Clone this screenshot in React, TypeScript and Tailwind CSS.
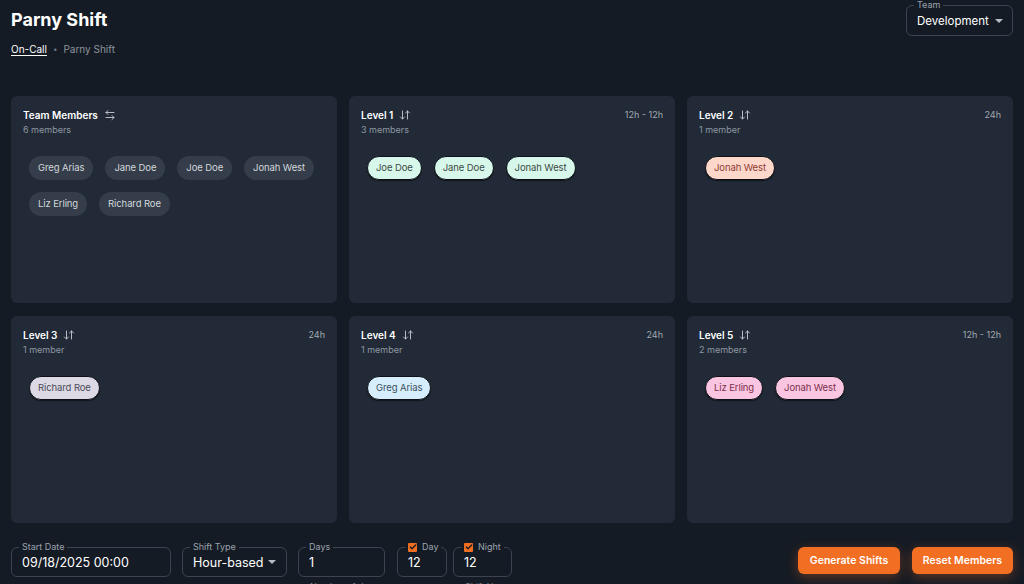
import { ArrowDownUp, ArrowLeftRight, Check } from 'lucide-react';

type Tone = 'gray' | 'mint' | 'peach' | 'lavender' | 'sky' | 'pink';

const toneClass: Record<Tone, string> = {
    gray: 'bg-[#343d49] text-[#d3d7dc] border-transparent',
    mint: 'bg-[#d7f7ea] text-[#3d4a45] border-[#0d1117] shadow-[0_1px_1px_rgba(0,0,0,0.5)]',
    peach: 'bg-[#fdd8ca] text-[#8d3a33] border-[#0d1117] shadow-[0_1px_1px_rgba(0,0,0,0.5)]',
    lavender: 'bg-[#dcd8e4] text-[#4b4b59] border-[#0d1117] shadow-[0_1px_1px_rgba(0,0,0,0.5)]',
    sky: 'bg-[#d6eefc] text-[#3d5062] border-[#0d1117] shadow-[0_1px_1px_rgba(0,0,0,0.5)]',
    pink: 'bg-[#fac5e0] text-[#7c2f4c] border-[#0d1117] shadow-[0_1px_1px_rgba(0,0,0,0.5)]',
};

interface Group {
    title: string;
    count: string;
    hours?: string;
    tone: Tone;
    members: string[];
    team?: boolean;
}

const groups: Group[] = [
    {
        title: 'Team Members',
        count: '6 members',
        tone: 'gray',
        members: ['Greg Arias', 'Jane Doe', 'Joe Doe', 'Jonah West', 'Liz Erling', 'Richard Roe'],
        team: true,
    },
    { title: 'Level 1', count: '3 members', hours: '12h - 12h', tone: 'mint', members: ['Joe Doe', 'Jane Doe', 'Jonah West'] },
    { title: 'Level 2', count: '1 member', hours: '24h', tone: 'peach', members: ['Jonah West'] },
    { title: 'Level 3', count: '1 member', hours: '24h', tone: 'lavender', members: ['Richard Roe'] },
    { title: 'Level 4', count: '1 member', hours: '24h', tone: 'sky', members: ['Greg Arias'] },
    { title: 'Level 5', count: '2 members', hours: '12h - 12h', tone: 'pink', members: ['Liz Erling', 'Jonah West'] },
];

function GroupCard({ group }: { group: Group }) {
    return (
        <div className="bg-[#212a36] rounded-md px-3 pt-3 h-[207px]">
            <div className="flex items-start justify-between">
                <div>
                    <div className="flex items-center gap-[6px] h-[14px]">
                        <span className="text-[10px] font-semibold text-white leading-[14px]">{group.title}</span>
                        {group.team ? (
                            <ArrowLeftRight className="w-[12px] h-[12px] text-[#c9ced6]" strokeWidth={1.8} />
                        ) : (
                            <ArrowDownUp className="w-[12px] h-[12px] text-[#c9ced6]" strokeWidth={1.8} />
                        )}
                    </div>
                    <p className="text-[9px] text-[#8f98a3] leading-[12px] mt-[2px]">{group.count}</p>
                </div>
                {group.hours && (
                    <span className="text-[9px] text-[#a3abb5] leading-[14px]">{group.hours}</span>
                )}
            </div>
            <div className="flex flex-wrap gap-3 px-[6px] mt-[20px]">
                {group.members.map((m) => (
                    <span
                        key={m}
                        className={`h-[24px] px-[8px] rounded-full border flex items-center text-[9.5px] leading-none tracking-[-0.1px] ${toneClass[group.tone]}`}
                    >
                        {m}
                    </span>
                ))}
            </div>
        </div>
    );
}

function Field({
    label,
    value,
    width,
    select,
    checkbox,
    helper,
}: {
    label: string;
    value: string;
    width: string;
    select?: boolean;
    checkbox?: boolean;
    helper?: string;
}) {
    return (
        <div className={width}>
            <div className="relative h-[30px] border border-[#3b4450] rounded-md flex items-center px-[10px]">
                <span className="absolute -top-[7px] left-[7px] px-[3px] bg-[#151b24] flex items-center gap-[5px] text-[9px] leading-[12px] text-[#9aa2ad]">
                    {checkbox && (
                        <span className="w-[9px] h-[9px] rounded-[1px] bg-[#f06e22] flex items-center justify-center">
                            <Check className="w-[8px] h-[8px] text-[#151b24]" strokeWidth={4} />
                        </span>
                    )}
                    {label}
                </span>
                <span className="text-[12.5px] text-white flex-1 pt-[2px]">{value}</span>
                {select && (
                    <svg width="8" height="4" viewBox="0 0 8 4" className="text-[#b8bec7]">
                        <path d="M0 0h8L4 4z" fill="currentColor" />
                    </svg>
                )}
            </div>
            {helper && <p className="text-[9px] text-[#7e8792] mt-[3px] pl-[12px] whitespace-nowrap">{helper}</p>}
        </div>
    );
}

export default function App() {
    return (
        <div className="h-screen bg-[#151b24] px-[11px] pt-[8px] font-['Inter',sans-serif] overflow-hidden">
            {/* Header */}
            <div className="flex justify-between items-start h-[88px]">
                <div>
                    <h1 className="text-[18px] font-bold text-white leading-[24px]">Parny Shift</h1>
                    <div className="flex items-center gap-[6px] mt-[10px] text-[10px] leading-[14px]">
                        <span className="text-white underline underline-offset-2">On-Call</span>
                        <span className="text-[#6b7480] text-[8px]">•</span>
                        <span className="text-[#8a939e]">Parny Shift</span>
                    </div>
                </div>
                <div className="relative mt-[-3px] w-[107px] h-[31px] border border-[#3b4450] rounded-md flex items-center gap-[6px] pl-[10px] pr-[9px]">
                    <span className="absolute -top-[7px] left-[7px] px-[3px] bg-[#151b24] text-[9px] leading-[12px] text-[#9aa2ad]">Team</span>
                    <span className="text-[11.5px] text-white flex-1 pt-[2px] whitespace-nowrap">Development</span>
                    <svg width="8" height="4" viewBox="0 0 8 4" className="text-[#b8bec7] shrink-0">
                        <path d="M0 0h8L4 4z" fill="currentColor" />
                    </svg>
                </div>
            </div>

            {/* Groups */}
            <div className="grid grid-cols-3 gap-x-3 gap-y-[13px]">
                {groups.map((g) => (
                    <GroupCard key={g.title} group={g} />
                ))}
            </div>

            {/* Controls */}
            <div className="flex items-start justify-between mt-[24px]">
                <div className="flex items-start">
                    <Field label="Start Date" value="09/18/2025 00:00" width="w-[160px]" />
                    <div className="w-[11px]" />
                    <Field label="Shift Type" value="Hour-based" width="w-[105px]" select />
                    <div className="w-[11px]" />
                    <Field label="Days" value="1" width="w-[87px]" helper="Number of days" />
                    <div className="w-[12px]" />
                    <Field label="Day" value="12" width="w-[50px]" checkbox />
                    <div className="w-[6px]" />
                    <Field label="Night" value="12" width="w-[59px]" checkbox helper="Shift Hours" />
                </div>
                <div className="flex gap-3">
                    <button className="h-[27px] w-[102px] rounded-md bg-[#f26e22] text-white text-[10.5px] font-semibold shadow-[0_3px_12px_rgba(242,110,34,0.35)]">
                        Generate Shifts
                    </button>
                    <button className="h-[27px] w-[101px] rounded-md bg-[#f26e22] text-white text-[10.5px] font-semibold shadow-[0_3px_12px_rgba(242,110,34,0.35)]">
                        Reset Members
                    </button>
                </div>
            </div>
        </div>
    );
}
